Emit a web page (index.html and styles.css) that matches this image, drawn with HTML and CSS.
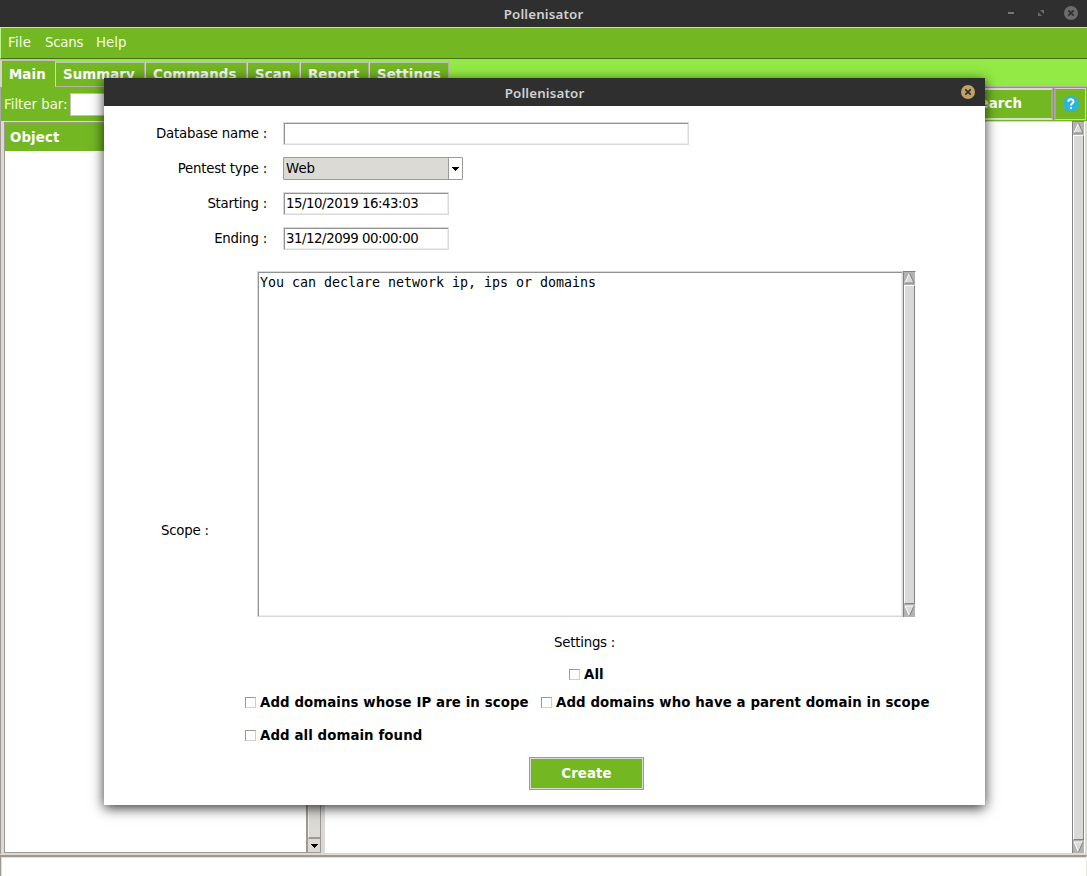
FILE: index.html
```html
<!DOCTYPE html>
<html lang="en">
<head>
<meta charset="utf-8">
<title>Pollenisator</title>
<link rel="stylesheet" href="styles.css">
</head>
<body>
<div class="app">
  <header class="titlebar">
    <span class="title">Pollenisator</span>
    <svg class="window-controls" width="80" height="27" viewBox="0 0 80 27">
      <path d="M1 13h6" stroke="#777" stroke-width="2"/>
      <path d="M33 10h4v4zM31 12v4h4z" fill="#6c6c6c"/>
      <circle cx="64" cy="13" r="7" fill="#6c6c6c"/>
      <path d="M61.3 10.3l5.4 5.4M66.7 10.3l-5.4 5.4" stroke="#303030" stroke-width="1.8"/>
    </svg>
  </header>
  <nav class="menubar"><span class="m-file">File</span><span class="m-scans">Scans</span><span class="m-help">Help</span></nav>
  <div class="tabs">
    <div class="tab tab-main active"><span>Main</span></div>
    <div class="tab tab-summary"><span>Summary</span></div>
    <div class="tab tab-commands"><span>Commands</span></div>
    <div class="tab tab-scan"><span>Scan</span></div>
    <div class="tab tab-report"><span>Report</span></div>
    <div class="tab tab-settings"><span>Settings</span></div>
  </div>
  <div class="filter">
    <span class="filter-label">Filter bar:</span>
    <div class="filter-input"></div>
    <div class="search"><span>Search</span></div>
    <div class="help">
      <svg width="16" height="16" viewBox="0 0 16 16"><circle cx="8" cy="8" r="8" fill="#29b6d8"/><path d="M5.3 5.7C5.5 2.5 10.6 2.7 10.5 5.6C10.4 7.3 8 7.3 8 9.6M8 11v2" fill="none" stroke="#fff" stroke-width="2"/></svg>
    </div>
  </div>
  <main class="panes">
    <section class="tree">
      <div class="tree-body"><div class="tree-head"><span>Object</span></div></div>
      <div class="tree-scroll">
        <div class="tree-thumb"></div>
        <div class="tree-down"><svg width="7" height="4" viewBox="0 0 7 4"><path d="M0 0h7v1H6v1H5v1H4v1H3V3H2V2H1V1H0z"/></svg></div>
      </div>
    </section>
    <div class="sash"></div>
    <section class="view"></section>
    <div class="scrollbar main-scroll">
      <svg width="11" height="12" viewBox="0 0 11 12"><path d="M0 0h11v12H0z" fill="#b3b3b3"/><path d="M5.5 1L10 11H1z" fill="#d9d9d9"/><path d="M5.5 1L1 11" stroke="#fff"/><path d="M5.5 1L10 11H1" fill="none" stroke="#828282"/></svg>
      <div class="thumb"></div>
      <svg width="11" height="12" viewBox="0 0 11 12"><path d="M0 0h11v12H0z" fill="#b3b3b3"/><path d="M1 1h9L5.500 11z" fill="#d9d9d9"/><path d="M5.500 11L1 1h9" fill="none" stroke="#fff"/><path d="M10 1L5.500 11" stroke="#828282"/></svg>
    </div>
  </main>
  <footer class="status"></footer>
</div>

<div class="dialog">
  <header class="titlebar dialog-title">
    <span class="title">Pollenisator</span>
    <svg class="dialog-close" width="16" height="16" viewBox="0 0 16 16"><circle cx="8" cy="8" r="7" fill="#bfa366"/><path d="M5.300 5.300l5.400 5.400M10.700 5.300l-5.400 5.400" stroke="#303030" stroke-width="1.800"/></svg>
  </header>
  <div class="form">
    <div class="row"><label>Database name :</label><div class="field wide"></div></div>
    <div class="row"><label>Pentest type :</label>
      <div class="combo"><span>Web</span><div class="combo-button"><svg width="7" height="4" viewBox="0 0 7 4"><path d="M0 0h7v1H6v1H5v1H4v1H3V3H2V2H1V1H0z"/></svg></div></div>
    </div>
    <div class="row"><label>Starting :</label><div class="field"><span>15/10/2019 16:43:03</span></div></div>
    <div class="row"><label>Ending :</label><div class="field"><span>31/12/2099 00:00:00</span></div></div>
  </div>
  <div class="scope">
    <label>Scope :</label>
    <div class="textarea"><span>You can declare network ip, ips or domains</span></div>
    <div class="scrollbar">
      <svg width="11" height="12" viewBox="0 0 11 12"><path d="M0 0h11v12H0z" fill="#b3b3b3"/><path d="M5.500 1L10 11H1z" fill="#d9d9d9"/><path d="M5.500 1L1 11" stroke="#fff"/><path d="M5.500 1L10 11H1" fill="none" stroke="#828282"/></svg>
      <div class="thumb"></div>
      <svg width="11" height="12" viewBox="0 0 11 12"><path d="M0 0h11v12H0z" fill="#b3b3b3"/><path d="M1 1h9L5.500 11z" fill="#d9d9d9"/><path d="M5.500 11L1 1h9" fill="none" stroke="#fff"/><path d="M10 1L5.500 11" stroke="#828282"/></svg>
    </div>
  </div>
  <div class="settings-label"><span>Settings :</span></div>
  <div class="check check-all"><i></i><span>All</span></div>
  <div class="checks">
    <div class="check"><i></i><span>Add domains whose IP are in scope</span></div>
    <div class="check"><i></i><span>Add domains who have a parent domain in scope</span></div>
    <div class="check"><i></i><span>Add all domain found</span></div>
  </div>
  <div class="create"><span>Create</span></div>
</div>
</body>
</html>
```
FILE: styles.css
```css
* { box-sizing: border-box; }
body {
  margin: 0;
  width: 1087px;
  height: 876px;
  overflow: hidden;
  position: relative;
  font: 13.33px/16px "DejaVu Sans", sans-serif;
  letter-spacing: -.23px;
  color: #000;
  background: #fff;
}
svg { display: block; flex: none; }
span, label { white-space: nowrap; }
.app { display: flex; flex-direction: column; height: 876px; }
.titlebar {
  height: 27px;
  flex: none;
  display: grid;
  grid-template-columns: 1fr auto 1fr;
  align-items: center;
  background: #2f2f2f;
  color: #d0d0d0;
}
.title { grid-column: 2; font: 600 13.33px/18px "Noto Sans", sans-serif; letter-spacing: .15px; margin-top: 1px; }
.window-controls { justify-self: end; }
.menubar {
  height: 32px;
  flex: none;
  display: flex;
  align-items: center;
  padding-left: 7px;
  border-top: 1px solid #b8f588;
  border-left: 1px solid #b8f588;
  border-bottom: 1px solid #477116;
  background: #73b723;
  color: #f4ffe0;
  letter-spacing: 0;
}
.m-file { width: 37px; letter-spacing: .2px; }
.m-scans { width: 51px; letter-spacing: -.25px; }
.tabs {
  height: 28px;
  flex: none;
  display: flex;
  align-items: flex-start;
  padding-top: 2px;
  background: #93ea44;
  border-bottom: 1px solid #b9b0ac;
  color: #fff;
  font-weight: bold;
  letter-spacing: .1px;
}
.tab {
  height: 26px;
  background: #73b723;
  border: 1px solid #b9b0ac;
  border-left-color: #d8d0cc;
  border-top: 2px solid #c5bdb8;
  padding: 4px 0 0 7px;
}
.tab.active { height: 28px; margin-top: -1px; width: 55px; border-width: 1px 0 0 2px; padding: 6px 0 0 7px; }
.tab-summary { width: 90px; }
.tab-commands { width: 102px; }
.tab-scan { width: 53px; }
.tab-report { width: 69px; }
.tab-settings { width: 80px; }
.filter {
  height: 34px;
  flex: none;
  display: flex;
  align-items: center;
  padding: 1px 1px 1px 4px;
  background: #73b723;
  color: #f4ffe0;
  border-left: 1px solid #aaa;
}
.filter-label { width: 65px; margin-left: -1px; letter-spacing: 0; padding-top: 1px; }
.filter-input { width: 820px; height: 23px; margin-left: 1px; background: #fff; border: 1px solid #c8c0b8; }
.search {
  flex: 1;
  height: 32px;
  display: flex;
  align-items: center;
  justify-content: flex-end;
  padding-right: 29px;
  border: 2px solid #dcdad5;
  border-right-color: #aaa29c;
  color: #fff;
  font-weight: bold;
  letter-spacing: .1px;
}
.help {
  width: 32px;
  height: 32px;
  margin-left: 1px;
  display: grid;
  place-items: center;
  border: 1px solid #d8d0cc;
  border-left: 2px solid #aaa29c;
}
.panes {
  flex: 1;
  display: flex;
  min-height: 0;
  padding-left: 3px;
  padding-right: 2px;
  background: #dcdad5;
  border-left: 1px solid #9e9a91;
  border-bottom: 2px solid #dcdad5;
}
.tree { width: 317px; display: flex; border-top: 1px solid #dcdad5; border-bottom: 1px solid #9e9a91; }
.tree-body { flex: 1; background: #fff; border: 1px solid #9e9a91; border-right: 0; border-bottom: 0; }
.tree-head { height: 28px; background: #73b723; color: #fff; font-weight: bold; letter-spacing: .1px; padding: 7px 0 0 5px; }
.tree-scroll { width: 15px; display: flex; flex-direction: column; background: #dcdad5; border-left: 2px solid #9e9a91; border-right: 1px solid #9e9a91; }
.tree-thumb { flex: 1; border-left: 1px solid #f0eeea; border-bottom: 2px solid #9e9a91; }
.tree-down { height: 13px; display: grid; place-items: center; }
.sash { width: 4px; background: #d9d9d9; }
.view { flex: 1; background: #fff; border-top: 1px solid #d9d9d9; }
.scrollbar { width: 13px; display: flex; flex-direction: column; background: #b3b3b3; border: 1px solid #828282; border-right-color: #fff; border-bottom: 0; }
.thumb { flex: 1; margin: 1px 0; background: #d9d9d9; border: 1px solid #fff; border-right-color: #828282; border-bottom-color: #828282; }
.status { height: 21px; flex: none; border-top: 2px solid #9e9a91; border-left: 1px solid #9e9a91; border-right: 1px solid #e8e6e0; box-shadow: inset 1px 1px #e0deda; background: #fff; }

.dialog {
  position: absolute;
  left: 104px;
  top: 78px;
  width: 881px;
  height: 727px;
  background: #fff;
  box-shadow: 0 3px 12px rgba(0,0,0,.8);
}
.dialog-title { height: 28px; }
.dialog-close { justify-self: end; margin-right: 9px; }
.form { padding-top: 16px; display: flex; flex-direction: column; gap: 12px; height: 165px; }
.row { height: 23px; display: flex; align-items: center; }
.row label { width: 163px; text-align: right; margin-right: 16px; }
.field {
  width: 166px;
  height: 23px;
  border: 1px solid #d9d9d9;
  box-shadow: inset 1px 1px #929292, inset -1px -1px #ececec;
  padding: 3px 0 0 2px;
  letter-spacing: -.46px;
}
.wide { width: 406px; }
.combo {
  width: 180px;
  height: 23px;
  display: flex;
  border: 1px solid #9e9a91;
  border-radius: 1px;
  background: #dcdad5;
  padding-left: 2px;
  line-height: 22px;
  letter-spacing: 0;
}
.combo span { flex: 1; }
.combo-button { width: 14px; display: grid; place-items: center; background: #fff; border-left: 1px solid #9e9a91; }
.scope { height: 346px; display: flex; }
.scope label { width: 153px; padding: 252px 0 0 57px; }
.textarea {
  width: 646px;
  border: 1px solid #d9d9d9;
  box-shadow: inset 1px 1px #929292, inset -1px -1px #ececec;
  padding: 3px 0 0 2px;
  font-family: "DejaVu Sans Mono", monospace;
  letter-spacing: -.025px;
}
.settings-label { padding: 18px 0 0 450px; height: 49px; }
.check { height: 16px; display: flex; align-items: center; gap: 4px; font-weight: bold; letter-spacing: .09px; }
.check span { padding-top: 2px; }
.check i { width: 11px; height: 11px; border: 1px solid #9e9a91; border-right-color: #d0cec8; border-bottom-color: #d0cec8; margin-top: 1px; }
.check-all { margin-left: 465px; }
.checks { display: grid; grid-template-columns: 296px auto; gap: 17px 0; padding: 12px 0 0 141px; }
.create {
  width: 115px;
  height: 33px;
  margin: 14px 0 0 425px;
  display: grid;
  place-items: center;
  color: #fff;
  font-weight: bold;
  letter-spacing: .1px;
  background: #73b723;
  border: 1px solid #9e9a91;
  box-shadow: inset 0 0 0 1px #dcdad5;
}
```
